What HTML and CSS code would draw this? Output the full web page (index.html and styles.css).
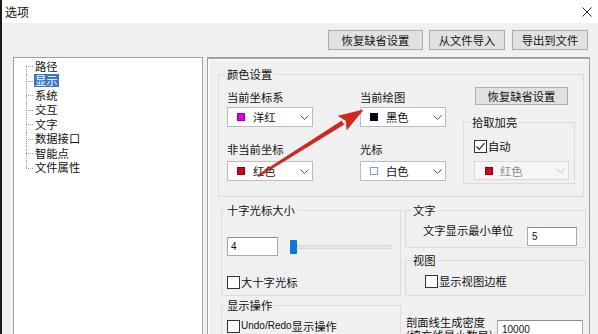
FILE: index.html
```html
<!DOCTYPE html>
<html lang="zh-CN">
<head>
    <meta charset="UTF-8">
    <title>选项</title>
    <link rel="stylesheet" href="styles.css">
</head>
<body>
    <div class="titlebar">
        <span class="title">选项</span>
        <svg class="close" width="10" height="10" viewBox="0 0 10 10"><path d="M0.5 0.5L9.5 9.5M9.5 0.5L0.5 9.5" stroke="#222" stroke-width="1" fill="none"/></svg>
    </div>

    <div class="toolbar">
        <button class="btn btn-wide">恢复缺省设置</button>
        <button class="btn btn-import">从文件导入</button>
        <button class="btn">导出到文件</button>
    </div>

    <div class="main">
        <ul class="tree">
            <li><span>路径</span></li>
            <li class="sel"><span>显示</span></li>
            <li><span>系统</span></li>
            <li><span>交互</span></li>
            <li><span>文字</span></li>
            <li><span>数据接口</span></li>
            <li><span>智能点</span></li>
            <li><span>文件属性</span></li>
        </ul>

        <div class="panel">
            <div class="group color-group">
                <div class="group-title">颜色设置</div>
                <div class="color-body">
                    <div class="color-col">
                        <div class="lbl">当前坐标系</div>
                        <div class="combo">
                            <span class="swatch sw-magenta"></span>洋红
                            <svg class="chev" width="9" height="5" viewBox="0 0 9 5"><polyline points="0.5,0.5 4.5,4.5 8.5,0.5" stroke="#555" fill="none"/></svg>
                        </div>
                        <div class="lbl lbl-2">非当前坐标</div>
                        <div class="combo combo-2">
                            <span class="swatch sw-red"></span>红色
                            <svg class="chev" width="9" height="5" viewBox="0 0 9 5"><polyline points="0.5,0.5 4.5,4.5 8.5,0.5" stroke="#555" fill="none"/></svg>
                        </div>
                    </div>
                    <div class="color-col">
                        <div class="lbl">当前绘图</div>
                        <div class="combo">
                            <span class="swatch sw-black"></span>黑色
                            <svg class="chev" width="9" height="5" viewBox="0 0 9 5"><polyline points="0.5,0.5 4.5,4.5 8.5,0.5" stroke="#555" fill="none"/></svg>
                        </div>
                        <div class="lbl lbl-2">光标</div>
                        <div class="combo combo-2">
                            <span class="swatch sw-white"></span>白色
                            <svg class="chev" width="9" height="5" viewBox="0 0 9 5"><polyline points="0.5,0.5 4.5,4.5 8.5,0.5" stroke="#555" fill="none"/></svg>
                        </div>
                    </div>
                    <div class="pick-col">
                        <button class="btn btn-reset">恢复缺省设置</button>
                        <div class="group pick-group">
                            <div class="group-title">拾取加亮</div>
                            <label class="check check-auto">
                                <span class="box"><svg width="11" height="11" viewBox="0 0 11 11"><path d="M1.5 5.5L4.2 8.3L9.5 2.2" stroke="#222" stroke-width="1.2" fill="none"/></svg></span>自动
                            </label>
                            <div class="combo combo-off">
                                <span class="swatch sw-red"></span>红色
                                <svg class="chev" width="9" height="5" viewBox="0 0 9 5"><polyline points="0.5,0.5 4.5,4.5 8.5,0.5" stroke="#c4c4c4" fill="none"/></svg>
                            </div>
                        </div>
                    </div>
                </div>
            </div>

            <div class="lower">
                <div class="lower-left">
                    <div class="group cross-group">
                        <div class="group-title">十字光标大小</div>
                        <div class="cross-row">
                            <div class="edit edit-size">4</div>
                            <div class="slider">
                                <span class="thumb"></span>
                                <span class="track"></span>
                            </div>
                        </div>
                        <label class="check check-big"><span class="box"></span>大十字光标</label>
                    </div>
                    <div class="group op-group">
                        <div class="group-title">显示操作</div>
                        <label class="check check-undo"><span class="box"></span><span class="latin">Undo/Redo</span>显示操作</label>
                    </div>
                </div>

                <div class="lower-right">
                    <div class="group text-group">
                        <div class="group-title">文字</div>
                        <div class="text-row">
                            <span>文字显示最小单位</span>
                            <div class="edit edit-unit">5</div>
                        </div>
                    </div>
                    <div class="group view-group">
                        <div class="group-title">视图</div>
                        <label class="check check-view"><span class="box"></span>显示视图边框</label>
                    </div>
                    <div class="density">
                        <span>剖面线生成密度<br>(填充线最小数目)</span>
                        <div class="edit edit-density">10000</div>
                    </div>
                </div>
            </div>
        </div>
    </div>

    <svg class="arrow" width="598" height="334" viewBox="0 0 598 334">
        <polygon points="257.5,175.2 341.6,121.1 343.8,124.5 258.5,176.8" fill="#d3261f" stroke="#b01a16" stroke-width="0.6"/>
        <polygon points="363,110 338.4,116 346.1,120.7 347,129.6" fill="#d3261f" stroke="#b01a16" stroke-width="0.6"/>
    </svg>
</body>
</html>
```

FILE: styles.css
```css
* {
    box-sizing: border-box;
}
body {
    margin: 0;
    width: 598px;
    height: 334px;
    overflow: hidden;
    position: relative;
    background: #f0f0f0;
    border-left: 2px solid #1d1b18;
    font-family: "Noto Sans CJK SC", "Noto Sans", sans-serif;
    font-size: 11.3px;
    line-height: 14px;
    color: #111;
}
.titlebar {
    display: flex;
    align-items: center;
    height: 23px;
    padding: 0 6px 0 3px;
    background: #fff;
}
.title {
    font-size: 12px;
}
.close {
    margin-left: auto;
}
.toolbar {
    display: flex;
    justify-content: flex-end;
    padding: 7px 10px 0 0;
}
.btn {
    width: 76px;
    height: 20px;
    margin-left: 7px;
    padding: 0;
    border: 1px solid #adadad;
    background: #e1e1e1;
    font: inherit;
    line-height: 18px;
    color: #111;
}
.btn-wide {
    width: 95px;
}
.btn-import {
    margin-left: 6px;
}
.main {
    display: flex;
    margin-top: 7px;
    height: 290px;
}

/* tree */
.tree {
    width: 190px;
    margin: 0 0 0 11px;
    padding: 1px 0 0 21px;
    list-style: none;
    background: #fff;
    border: 1px solid #a0a0a0;
}
.tree li {
    position: relative;
    display: flex;
    align-items: center;
    height: 14.5px;
}
.tree li::before {
    content: "";
    position: absolute;
    left: -9px;
    top: 7px;
    width: 7px;
    border-top: 1px dotted #a0a0a0;
}
.tree li::after {
    content: "";
    position: absolute;
    left: -9px;
    top: 0;
    bottom: 0;
    border-left: 1px dotted #a0a0a0;
}
.tree li:first-child::after {
    top: 7px;
}
.tree li:last-child::after {
    bottom: 7px;
}
.tree span {
    display: inline-block;
    height: 13px;
    line-height: 13px;
    padding: 0 1px;
    margin-left: -1px;
}
.tree .sel span {
    background: #3876c4;
    color: #fff;
}

/* right panel */
.panel {
    width: 383px;
    margin-left: 4px;
    border: 1px solid #a0a0a0;
    border-top-width: 2px;
    box-shadow: inset 1px 1px 0 #fff;
}
.group {
    border: 1px solid #dcdcdc;
}
.group-title {
    width: fit-content;
    height: 14px;
    margin: -8px 0 0 5px;
    padding: 0 2px;
    background: #f0f0f0;
}
.color-group {
    width: 366px;
    height: 123px;
    margin: 15px 0 0 10px;
}
.color-group > .group-title,
.pick-group > .group-title {
    margin-left: 6px;
}
.color-body {
    display: flex;
    padding-left: 8px;
}
.color-col {
    width: 86px;
    margin-top: 9px;
}
.color-col + .color-col {
    margin-left: 47px;
}
.lbl {
    height: 14px;
}
.lbl-2 {
    margin-top: 15px;
}
.combo {
    display: flex;
    align-items: center;
    height: 20px;
    margin-top: 3px;
    padding-left: 9px;
    background: #fff;
    border: 1px solid #bcbcbc;
}
.combo-2 {
    margin-top: 5px;
}
.swatch {
    width: 8px;
    height: 8px;
    margin-right: 8px;
    border: 1px solid rgba(0,0,0,0.35);
}
.sw-magenta { background: #e000e8; }
.sw-black { background: #00081a; }
.sw-red { background: #d4001c; }
.sw-white { background: #fff; border-color: #7f9db9; }
.chev {
    margin-left: auto;
    margin-right: 3px;
}
.pick-col {
    width: 112px;
    margin-left: 17px;
}
.btn-reset {
    display: block;
    width: 93px;
    height: 18px;
    margin: 6px 0 0 12px;
    line-height: 16px;
}
.pick-group {
    height: 62px;
    margin-top: 17px;
}
.check {
    display: flex;
    align-items: center;
    height: 14px;
}
.box {
    display: flex;
    width: 13px;
    height: 13px;
    margin-right: 1px;
    border: 1px solid #333;
    background: #fff;
}
.check-auto {
    margin: 10px 0 0 10px;
}
.combo-off {
    width: 95px;
    height: 19px;
    margin: 8px 0 0 10px;
    padding-left: 10px;
    background: #f6f6f6;
    border-color: #d9d9d9;
    color: #8c8c8c;
}
.combo-off .swatch {
    margin-right: 7px;
}

/* lower groups */
.lower {
    display: flex;
    margin: 13px 0 0 13px;
}
.lower-left {
    width: 180px;
}
.lower-right {
    width: 181px;
    margin-left: 4px;
}
.cross-group {
    height: 86px;
}
.cross-group > .group-title,
.op-group > .group-title {
    margin-left: 3px;
}
.cross-row {
    display: flex;
    align-items: center;
    margin: 20px 0 0 5px;
}
.edit {
    height: 19px;
    padding-left: 3px;
    border: 1px solid #a9a9a9;
    border-top-color: #8c8c8c;
    background: #fff;
    font-family: "Liberation Sans", sans-serif;
    font-size: 10px;
    line-height: 17px;
}
.edit-size {
    width: 51px;
}
.slider {
    display: flex;
    align-items: center;
    width: 102px;
    margin-left: 12px;
}
.thumb {
    width: 7px;
    height: 14px;
    background: #0a7ad6;
    border-radius: 1px;
}
.track {
    flex: 1;
    height: 4px;
    background: #e7e7e7;
    border: 1px solid #dadada;
}
.check-big {
    margin: 19px 0 0 5px;
}
.op-group {
    height: 60px;
    margin-top: 9px;
}
.check-undo {
    margin: 7px 0 0 5px;
}
.latin {
    font-family: "Liberation Sans", sans-serif;
    font-size: 10px;
}
.text-group {
    height: 38px;
}
.text-row {
    display: flex;
    align-items: flex-start;
    margin: 6px 0 0 17px;
}
.edit-unit {
    width: 50px;
    margin: 4px 8px 0 auto;
    padding-left: 4px;
}
.view-group {
    height: 36px;
    margin-top: 12px;
}
.check-view {
    margin: 7px 0 0 19px;
}
.density {
    display: flex;
    align-items: flex-start;
    margin: 20px 0 0 1px;
    line-height: 13px;
}
.edit-density {
    width: 86px;
    margin: 4px 3px 0 auto;
    padding-left: 4px;
}

/* annotation arrow */
.arrow {
    position: absolute;
    left: -2px;
    top: 0;
    pointer-events: none;
}
```
